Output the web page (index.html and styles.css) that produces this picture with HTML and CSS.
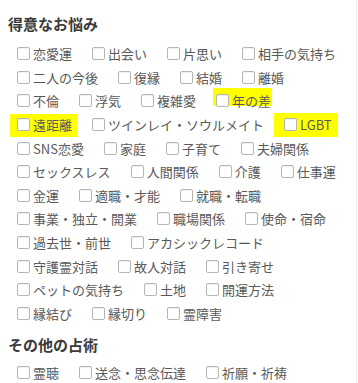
FILE: index.html
```html
<!DOCTYPE html>
<html lang="ja">
<head>
    <meta charset="UTF-8">
    <meta name="viewport" content="width=device-width, initial-scale=1.0">
    <title>得意なお悩み</title>
    <link rel="stylesheet" href="styles.css">
</head>
<body>
    <div class="panel">
        <h2 class="title">得意なお悩み</h2>
        <div class="checks">
            <label class="item"><span class="box"></span>恋愛運</label>
            <label class="item"><span class="box"></span>出会い</label>
            <label class="item"><span class="box"></span>片思い</label>
            <label class="item"><span class="box"></span>相手の気持ち</label>
            <label class="item"><span class="box"></span>二人の今後</label>
            <label class="item"><span class="box"></span>復縁</label>
            <label class="item"><span class="box"></span>結婚</label>
            <label class="item"><span class="box"></span>離婚</label>
            <label class="item"><span class="box"></span>不倫</label>
            <label class="item"><span class="box"></span>浮気</label>
            <label class="item"><span class="box"></span>複雑愛</label>
            <label class="item hl hl-a"><span class="box"></span>年の差</label>
            <label class="item hl hl-b"><span class="box"></span>遠距離</label>
            <label class="item"><span class="box"></span>ツインレイ・ソウルメイト</label>
            <label class="item hl hl-c"><span class="box"></span>LGBT</label>
            <label class="item"><span class="box"></span>SNS恋愛</label>
            <label class="item"><span class="box"></span>家庭</label>
            <label class="item"><span class="box"></span>子育て</label>
            <label class="item"><span class="box"></span>夫婦関係</label>
            <label class="item"><span class="box"></span>セックスレス</label>
            <label class="item"><span class="box"></span>人間関係</label>
            <label class="item"><span class="box"></span>介護</label>
            <label class="item"><span class="box"></span>仕事運</label>
            <label class="item"><span class="box"></span>金運</label>
            <label class="item"><span class="box"></span>適職・才能</label>
            <label class="item"><span class="box"></span>就職・転職</label>
            <label class="item"><span class="box"></span>事業・独立・開業</label>
            <label class="item"><span class="box"></span>職場関係</label>
            <label class="item"><span class="box"></span>使命・宿命</label>
            <label class="item"><span class="box"></span>過去世・前世</label>
            <label class="item"><span class="box"></span>アカシックレコード</label>
            <label class="item"><span class="box"></span>守護霊対話</label>
            <label class="item"><span class="box"></span>故人対話</label>
            <label class="item"><span class="box"></span>引き寄せ</label>
            <label class="item"><span class="box"></span>ペットの気持ち</label>
            <label class="item"><span class="box"></span>土地</label>
            <label class="item"><span class="box"></span>開運方法</label>
            <label class="item"><span class="box"></span>縁結び</label>
            <label class="item"><span class="box"></span>縁切り</label>
            <label class="item"><span class="box"></span>霊障害</label>
        </div>

        <h2 class="title title-next">その他の占術</h2>
        <div class="checks checks-next">
            <label class="item"><span class="box"></span>霊聴</label>
            <label class="item"><span class="box"></span>送念・思念伝達</label>
            <label class="item"><span class="box"></span>祈願・祈祷</label>
        </div>
    </div>
</body>
</html>
```

FILE: styles.css
```css
body {
    margin: 0;
    font-family: "Noto Sans CJK JP", "Noto Sans", sans-serif;
    background: #fff;
}
.panel {
    width: 357px;
    height: 383px;
    overflow: hidden;
    border-right: 1px solid #ededed;
    padding: 14px 0 0 8px;
    box-sizing: border-box;
}
.title {
    margin: 0;
    font-size: 15px;
    line-height: 20px;
    font-weight: bold;
    color: #3a3a3a;
}
.title-next {
    margin-top: 10px;
}
.checks {
    display: flex;
    flex-wrap: wrap;
    column-gap: 20px;
    width: 323px;
    padding: 8px 0 0 9px;
}
.checks-next {
    padding-top: 6px;
}
.item {
    position: relative;
    display: flex;
    align-items: center;
    height: 23.6px;
    font-size: 13px;
    color: #595959;
    white-space: nowrap;
}
.box {
    width: 11px;
    height: 11px;
    margin-right: 3px;
    border: 1px solid #b5b5b5;
    border-radius: 2px;
    background: #fff;
    box-shadow: inset 0 1px 1px rgba(0, 0, 0, 0.06);
}
.hl::before {
    content: "";
    position: absolute;
    background: #ffff00;
    z-index: -1;
}
.hl-a::before {
    left: -3px;
    right: -1px;
    top: -1px;
    bottom: 7px;
}
.hl-b::before {
    left: -7px;
    right: -5px;
    top: 1px;
    bottom: -1px;
}
.hl-c::before {
    left: -10px;
    right: -6px;
    top: 0;
    bottom: -1px;
}
.item.hl {
    z-index: 0;
}
```
